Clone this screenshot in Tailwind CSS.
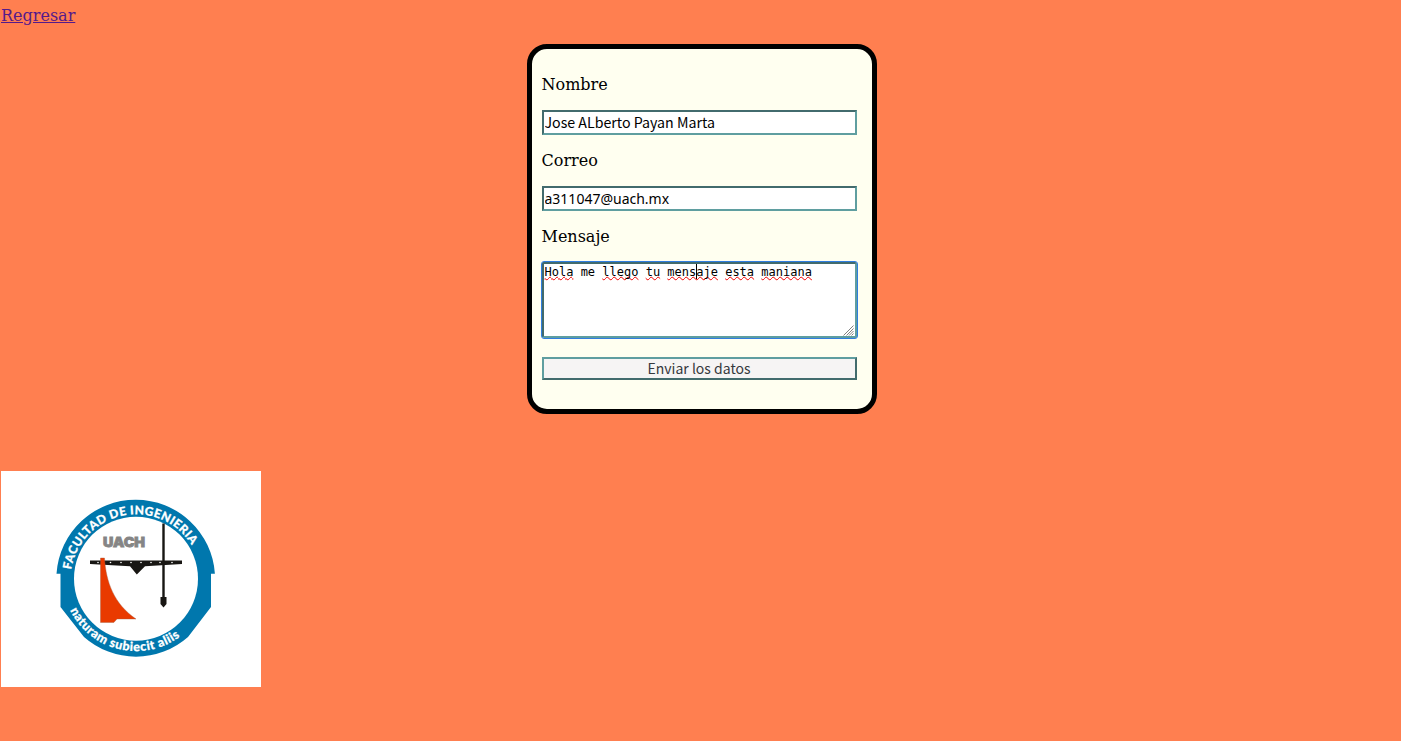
<!DOCTYPE html>
<html lang="es">
<head>
<meta charset="utf-8">
<title>Contacto</title>
<script src="https://cdn.jsdelivr.net/npm/@tailwindcss/browser@4"></script>
</head>
<body class="bg-[#ff7f50] h-[741px] overflow-hidden pl-px pt-1.5 font-['DejaVu_Serif',serif] text-[16px] leading-[19px] text-black">
<a href="#" class="block w-fit underline text-[#551a8b]">Regresar</a>
<form class="mt-[19px] ml-[525.5px] w-[350px] h-[370px] rounded-[20px] border-5 border-black bg-[#fffff0] pl-2.5 pt-[26px] flex flex-col">
  <label>Nombre</label>
  <input type="text" value="Jose ALberto Payan Marta" class="mt-4 w-[315px] h-[25px] border-2 border-solid border-t-[#426b6d] border-l-[#426b6d] border-r-[#5f9ea0] border-b-[#5f9ea0] bg-white px-px pb-px font-['Noto_Sans_CJK_SC',sans-serif] text-[14.2px]">
  <label class="mt-4">Correo</label>
  <input type="text" value="a311047@uach.mx" class="mt-4 w-[315px] h-[25px] border-2 border-solid border-t-[#426b6d] border-l-[#426b6d] border-r-[#5f9ea0] border-b-[#5f9ea0] bg-white px-px pb-px font-['Noto_Sans',sans-serif] text-[14px]">
  <label class="mt-4">Mensaje</label>
  <div class="relative mt-4 w-[315px] h-[76px] border-2 border-solid border-t-[#426b6d] border-l-[#426b6d] border-r-[#5f9ea0] border-b-[#5f9ea0] bg-white outline-1 outline-[#2f7de1] rounded-[2px] pl-px pt-px font-['DejaVu_Sans_Mono',monospace] text-[12px] leading-[14px] whitespace-pre"><span class="underline decoration-wavy decoration-[#f00000] decoration-1 underline-offset-0 [text-decoration-skip-ink:none]">Hola</span> me <span class="underline decoration-wavy decoration-[#f00000] decoration-1 underline-offset-0 [text-decoration-skip-ink:none]">llego</span> <span class="underline decoration-wavy decoration-[#f00000] decoration-1 underline-offset-0 [text-decoration-skip-ink:none]">tu</span> <span class="underline decoration-wavy decoration-[#f00000] decoration-1 underline-offset-0 [text-decoration-skip-ink:none]">mensaje</span> <span class="underline decoration-wavy decoration-[#f00000] decoration-1 underline-offset-0 [text-decoration-skip-ink:none]">esta</span> <span class="underline decoration-wavy decoration-[#f00000] decoration-1 underline-offset-0 [text-decoration-skip-ink:none]">maniana</span><i class="absolute left-[152px] top-0 w-px h-[15px] bg-black"></i><svg class="absolute right-px bottom-0" width="11" height="11" viewBox="0 0 11 11" stroke="#808080" stroke-width="1"><path d="M.5 10.500l10-10M3.500 10.500l7-7M6 10.500l4.500-4.500M8.500 10.500l2-2"/></svg></div>
  <button type="button" class="mt-[19px] w-[315px] h-[23px] border-2 border-solid border-t-[#5f9ea0] border-l-[#5f9ea0] border-r-[#426b6d] border-b-[#426b6d] bg-[#f6f4f4] pb-px font-['Noto_Sans_CJK_SC',sans-serif] text-[14px] leading-[18px] text-[#36393d]">Enviar los datos</button>
</form>
<svg class="mt-[57px] block bg-white" width="260" height="216" viewBox="1 471 260 216">
  <defs>
    <path id="arriba" d="M71.200 569.800A65.600 65.600 0 0 1 201.600 578.700"/>
    <path id="abajo" d="M70 610.200A73.700 73.700 0 0 0 209.700 578.700"/>
  </defs>
  <path d="M56.500 573.800A79.200 79.200 0 0 1 135.800 499.800A79.200 79.200 0 0 1 214.900 573.800H211V607L188 637A78.500 78.500 0 0 1 84 637L60.500 607V573.800Z" fill="#0077ad"/>
  <circle cx="136" cy="578.700" r="62" fill="#fff"/>
  <g fill="#fff" stroke="#fff" stroke-width=".25" font-family="Lato, sans-serif" font-weight="900">
    <text font-size="12" textLength="159" lengthAdjust="spacing"><textPath href="#arriba">FACULTAD DE INGENIERIA</textPath></text>
    <text font-size="12.500" textLength="129" lengthAdjust="spacing"><textPath href="#abajo">naturam subiecit aliis</textPath></text>
  </g>
  <text x="103" y="546.800" font-family="Inter, sans-serif" font-weight="900" font-size="13" fill="#858585" stroke="#858585" stroke-width=".8" textLength="42" lengthAdjust="spacingAndGlyphs">UACH</text>
  <path d="M162.300 523.500H164.700V597H166.500V604L163.500 607.500L160.500 604V597H162.300Z" fill="#181613"/>
  <path d="M90 560.500H182V564L145 566.300L136.800 574.500L130 566.300L90 564Z" fill="#181613"/>
  <g fill="#fff"><circle cx="98" cy="562.500" r=".8"/><circle cx="110.500" cy="562.500" r=".8"/><circle cx="121" cy="562.500" r=".8"/><circle cx="131" cy="562.500" r=".8"/><circle cx="141" cy="562.500" r=".8"/><circle cx="151" cy="562.500" r=".8"/><circle cx="160" cy="562.500" r=".8"/><circle cx="172" cy="562.500" r=".8"/></g>
  <path d="M100.500 558H104.500C106 582 114 604 136 619H117L113.800 622.500H100.500Z" fill="#e93a00" stroke="#a45a3c" stroke-width=".4"/>
</svg>
</body>
</html>
